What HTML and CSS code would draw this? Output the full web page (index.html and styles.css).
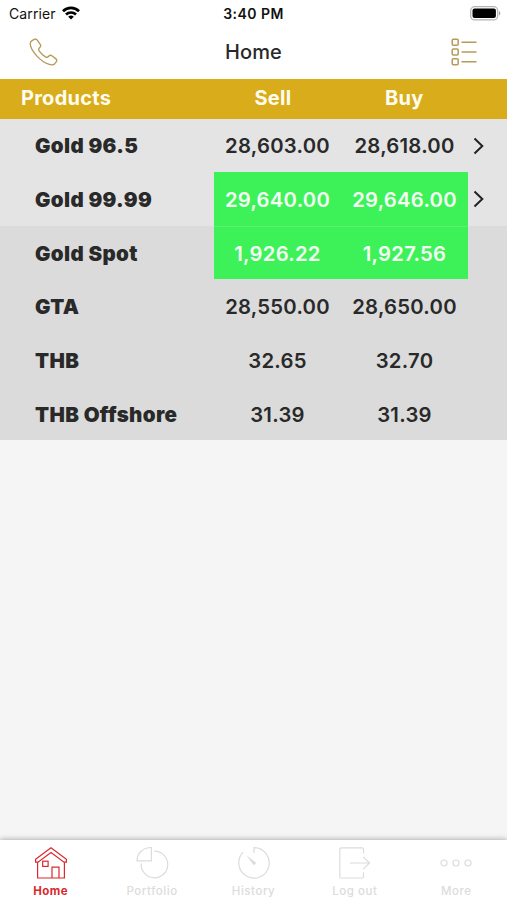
FILE: index.html
```html
<!DOCTYPE html>
<html lang="en">
<head>
    <meta charset="UTF-8">
    <title>Home</title>
    <link rel="stylesheet" href="styles.css">
</head>
<body>
    <div class="status-bar">
        <div class="carrier">
            <span>Carrier</span>
            <svg class="wifi" width="18" height="14" viewBox="0 0 18 14" fill="none" stroke="#000" stroke-width="2.7">
                <path d="M1 5.2a11.5 11.5 0 0 1 16 0"/>
                <path d="M4 8.5a7.2 7.2 0 0 1 10 0"/>
                <path d="M9 13.6L6.2 10.8a4 4 0 0 1 5.6 0z" fill="#000" stroke="none"/>
            </svg>
        </div>
        <div class="time">3:40 PM</div>
        <svg class="battery" width="31" height="15" viewBox="0 0 31 15">
            <rect x="0.7" y="0.7" width="27" height="13.2" rx="4" fill="#fff" stroke="#b4b4b4" stroke-width="1.3"/>
            <rect x="2.5" y="2.5" width="23.4" height="9.6" rx="2" fill="#000"/>
            <path d="M29 5v4.6c1.8-.8 1.8-3.8 0-4.6z" fill="#a0a0a0"/>
        </svg>
    </div>

    <div class="nav-bar">
        <svg class="phone" width="30" height="30" viewBox="0 0 30 30" fill="none" stroke="#b69a58" stroke-width="1.35" stroke-linejoin="round">
            <path d="M3 2.6L5.3 1.3C6.5 .7 7.6 1.2 8.4 2.3L11.2 6.3C12 7.5 11.8 8.7 10.7 9.6C9.4 10.7 9.3 11.7 10.3 13.2C12 15.6 14 17.5 16.4 18.9C17.8 19.7 18.7 19.5 19.7 18.3C20.7 17.2 21.8 17 22.9 17.8L26.6 20.6C27.8 21.5 28 22.6 27.2 23.8L25.8 25.7C24.6 27.1 22.3 27.2 19.6 26.2C15.6 24.8 11.4 21.8 8.2 18.4C4.7 14.7 2.1 10.6 1.4 7.2C.9 5 1.5 3.5 3 2.6z"/>
        </svg>
        <h1>Home</h1>
        <svg class="list" width="27" height="28" viewBox="0 0 27 28" fill="none" stroke="#b69a58" stroke-width="1.5">
            <rect x="1.2" y="1.2" width="6" height="6" rx="1.2"/>
            <rect x="1.2" y="11" width="6" height="6" rx="1.2"/>
            <rect x="1.2" y="20.8" width="6" height="6" rx="1.2"/>
            <path d="M10.5 4.2h15M10.5 14h15M10.5 23.8h15"/>
        </svg>
    </div>

    <div class="table-head">
        <div class="col-name">Products</div>
        <div class="col-sell">Sell</div>
        <div class="col-buy">Buy</div>
    </div>

    <div class="prices">
        <div class="row light">
            <div class="name">Gold 96.5</div>
            <div class="price">28,603.00</div>
            <div class="price">28,618.00</div>
            <svg class="arrow" width="11" height="18" viewBox="0 0 11 18"><path d="M1.5 1.5L9.3 9L1.5 16.5"/></svg>
        </div>
        <div class="row light">
            <div class="name">Gold 99.99</div>
            <div class="price up">29,640.00</div>
            <div class="price up">29,646.00</div>
            <svg class="arrow" width="11" height="18" viewBox="0 0 11 18"><path d="M1.5 1.5L9.3 9L1.5 16.5"/></svg>
        </div>
        <div class="row divided">
            <div class="name">Gold Spot</div>
            <div class="price up">1,926.22</div>
            <div class="price up">1,927.56</div>
        </div>
        <div class="row">
            <div class="name">GTA</div>
            <div class="price">28,550.00</div>
            <div class="price">28,650.00</div>
        </div>
        <div class="row">
            <div class="name">THB</div>
            <div class="price">32.65</div>
            <div class="price">32.70</div>
        </div>
        <div class="row">
            <div class="name">THB Offshore</div>
            <div class="price">31.39</div>
            <div class="price">31.39</div>
        </div>
    </div>

    <div class="tab-bar">
        <div class="tab active">
            <svg width="34" height="34" viewBox="0 0 34 34">
                <path d="M1.6 13.2L17 1.7L32.4 13.2V16.2H30L17 6.5L4 16.2H1.6z"/>
                <path d="M3.6 16.2V32H30.4V16.2M18 32V21.2H25V32"/>
                <rect x="8.7" y="15.2" width="5.4" height="5.2"/>
            </svg>
            <span>Home</span>
        </div>
        <div class="tab">
            <svg width="34" height="34" viewBox="0 0 34 34">
                <path d="M16.4 1.5V14.8H2C2 7 8 1.5 16.4 1.5z"/>
                <path d="M19.3 5.2A13.3 13.3 0 1 1 6.2 17.3"/>
            </svg>
            <span>Portfolio</span>
        </div>
        <div class="tab">
            <svg width="34" height="34" viewBox="0 0 34 34">
                <path d="M17 7V1.7A15.2 15.2 0 1 1 6.2 6.2"/>
                <path class="hand" d="M9.4 9.2L18.6 16.2A1.8 1.8 0 0 1 16.2 18.6z"/>
            </svg>
            <span>History</span>
        </div>
        <div class="tab">
            <svg width="34" height="34" viewBox="0 0 34 34">
                <path d="M25.5 7.5V3.3Q25.5 1.8 24 1.8H3.3Q1.8 1.8 1.8 3.3V30.5Q1.8 32 3.3 32H24Q25.5 32 25.5 30.5V26.3"/>
                <path d="M12 17H31.5M25.3 10.8L31.5 17L25.3 23.2"/>
            </svg>
            <span>Log out</span>
        </div>
        <div class="tab">
            <svg width="34" height="34" viewBox="0 0 34 34">
                <circle cx="5" cy="17" r="3"/>
                <circle cx="17" cy="17" r="3"/>
                <circle cx="29" cy="17" r="3"/>
            </svg>
            <span>More</span>
        </div>
    </div>
</body>
</html>
```
FILE: styles.css
```css
/* Base styles */
* {
    box-sizing: border-box;
}

body {
    margin: 0;
    height: 900px;
    overflow: hidden;
    display: flex;
    flex-direction: column;
    font-family: Inter, "Liberation Sans", sans-serif;
    color: #292929;
    background: #f5f5f5;
}

svg {
    display: block;
    flex-shrink: 0;
}

/* Status bar */
.status-bar {
    height: 27px;
    padding: 0 6px 0 9px;
    display: grid;
    grid-template-columns: 1fr auto 1fr;
    align-items: center;
    background: #fff;
    color: #111;
    font-size: 14px;
}

.carrier {
    display: flex;
    align-items: center;
    gap: 6px;
    letter-spacing: 0.1px;
}

.wifi {
    margin-top: -2px;
}

.time {
    margin-right: 3px;
    font-weight: 600;
    letter-spacing: 0.45px;
}

.battery {
    justify-self: end;
}

/* Navigation bar */
.nav-bar {
    height: 52px;
    padding: 0 29px 2px 29px;
    display: grid;
    grid-template-columns: 1fr auto 1fr;
    align-items: center;
    background: #fff;
}

.nav-bar h1 {
    margin: 0;
    font-size: 20px;
    font-weight: 500;
    letter-spacing: 0.1px;
}

.phone {
    margin-top: 2px;
}

.list {
    justify-self: end;
}

/* Price table */
.table-head {
    height: 39.5px;
    padding: 0 37px 1px 21px;
    display: flex;
    align-items: center;
    background: #d9ac1b;
    color: #fffdf0;
    font-size: 20px;
    font-weight: 700;
    letter-spacing: 0.25px;
}

.col-name {
    width: 187px;
}

.col-sell,
.col-buy {
    width: 132px;
    text-align: center;
}

.row {
    height: 53.67px;
    padding: 1px 0 0 35px;
    display: flex;
    align-items: center;
    background: #dbdbdb;
}

.row.light {
    background: #e4e4e4;
}

.name {
    width: 179px;
    font-size: 20.5px;
    font-weight: 900;
    letter-spacing: 0.35px;
}

.price {
    width: 127px;
    height: 100%;
    display: flex;
    align-items: center;
    justify-content: center;
    font-size: 20.3px;
    font-weight: 600;
    letter-spacing: 0.25px;
}

.price.up {
    height: 53.67px;
    margin-top: -1px;
    padding-top: 1px;
    background: #3df258;
    color: #f4fff4;
}

.divided .price.up {
    border-top: 1px solid #60ee75;
}

.arrow {
    margin-left: 5px;
    fill: none;
    stroke: #222;
    stroke-width: 2;
}

/* Tab bar */
.tab-bar {
    height: 60px;
    margin-top: auto;
    display: flex;
    background: #fff;
    box-shadow: 0 -1px 5px rgba(0, 0, 0, 0.28);
}

.tab {
    flex: 1;
    padding-top: 6px;
    display: flex;
    flex-direction: column;
    align-items: center;
    color: #dcdcdc;
    font-size: 11.5px;
    font-weight: 500;
    line-height: 16px;
    letter-spacing: 0.55px;
}

.tab svg {
    margin-bottom: 3px;
    fill: none;
    stroke: currentColor;
    stroke-width: 1.2;
}

.tab .hand {
    fill: currentColor;
    stroke: none;
}

.tab.active {
    color: #d9292e;
    font-weight: 700;
}

.tab.active span {
    letter-spacing: 0.5px;
}
```
